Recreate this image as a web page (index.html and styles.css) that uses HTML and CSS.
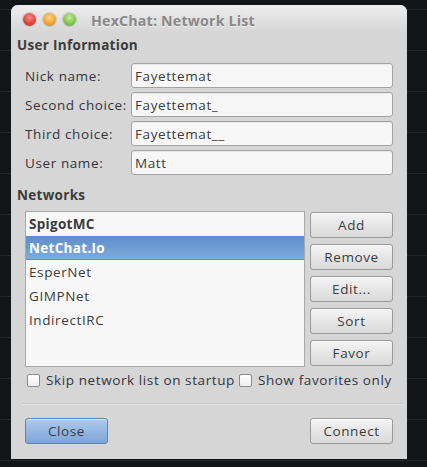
FILE: index.html
```html
<!DOCTYPE html>
<html lang="en">

<head>
    <meta charset="UTF-8">
    <meta name="viewport" content="width=device-width, initial-scale=1.0">
    <title>HexChat: Network List</title>
    <link rel="stylesheet" href="styles.css">
</head>

<body>
    <div class="dialog">
        <div class="titlebar">
            <div class="lights">
                <span class="light red"></span>
                <span class="light orange"></span>
                <span class="light green"></span>
            </div>
            <div class="title">HexChat: Network List</div>
        </div>
        <div class="content">
            <h3>User Information</h3>
            <div class="user_grid">
                <label>Nick name:</label>
                <input class="entry" type="text" value="Fayettemat">
                <label>Second choice:</label>
                <input class="entry" type="text" value="Fayettemat_">
                <label>Third choice:</label>
                <input class="entry" type="text" value="Fayettemat__">
                <label>User name:</label>
                <input class="entry" type="text" value="Matt">
            </div>

            <h3 class="net_title">Networks</h3>
            <div class="net_box">
                <ul class="net_list">
                    <li class="fav">SpigotMC</li>
                    <li class="fav selected">NetChat.Io</li>
                    <li>EsperNet</li>
                    <li>GIMPNet</li>
                    <li>IndirectIRC</li>
                </ul>
                <div class="net_buttons">
                    <button class="btn">Add</button>
                    <button class="btn">Remove</button>
                    <button class="btn">Edit...</button>
                    <button class="btn">Sort</button>
                    <button class="btn">Favor</button>
                </div>
            </div>

            <div class="checks">
                <label class="check"><span class="box"></span>Skip network list on startup</label>
                <label class="check"><span class="box"></span>Show favorites only</label>
            </div>

            <div class="sep"></div>

            <div class="actions">
                <button class="btn primary">Close</button>
                <button class="btn">Connect</button>
            </div>
        </div>
    </div>
</body>

</html>
```

FILE: styles.css
```css
* {
    margin: 0;
    padding: 0;
    box-sizing: border-box;
    list-style: none;
}

body {
    width: 427px;
    height: 467px;
    overflow: hidden;
    padding: 5px 0 0 11px;
    background: #141517 repeating-linear-gradient(180deg, transparent 0 9px, #27282a 9px 10px, transparent 10px 41px);
    font-family: "Open Sans", "DejaVu Sans", sans-serif;
    font-size: 13.5px;
    letter-spacing: .6px;
    color: #3c3c3c;
}

.dialog {
    width: 396px;
    height: 454px;
    background: #d6d6d6;
    border-radius: 7px 7px 0 0;
    display: flex;
    flex-direction: column;
}

/* title bar */
.titlebar {
    height: 28px;
    display: flex;
    align-items: center;
    padding-left: 12px;
    border-radius: 7px 7px 0 0;
    background: linear-gradient(180deg, #ededed, #d6d6d6);
}
.lights {
    display: flex;
    gap: 7px;
}
.light {
    width: 13px;
    height: 13px;
    border-radius: 50%;
    box-shadow: 0 0 0 1px rgba(0, 0, 0, .12);
}
.red {
    background: radial-gradient(circle at 50% 35%, #f58e84 0, #e0473a 55%, #b8281d 100%);
}
.orange {
    background: radial-gradient(circle at 50% 35%, #fbd28a 0, #f0a532 55%, #c97d14 100%);
}
.green {
    background: radial-gradient(circle at 50% 35%, #c4ec95 0, #84c752 55%, #5b9c30 100%);
}
.title {
    margin-left: 15px;
    margin-top: 2px;
    font-size: 14.2px;
    font-weight: bold;
    letter-spacing: .2px;
    color: #888;
    text-shadow: 0 1px 0 rgba(255, 255, 255, .5);
}

/* body */
.content {
    flex: 1;
    padding: 0 14px 0 6px;
    display: flex;
    flex-direction: column;
}
h3 {
    margin-top: 3px;
    height: 18px;
    line-height: 18px;
    font-size: 13.5px;
    font-weight: bold;
    letter-spacing: .3px;
    color: #3c3c3c;
}
.net_title {
    margin-top: 11px;
}

.user_grid {
    margin: 9px 0 0 8px;
    display: grid;
    grid-template-columns: 106px 1fr;
    row-gap: 4px;
    align-items: center;
}
.user_grid label {
    color: #343440;
}
.entry {
    height: 25px;
    padding: 0 3px;
    border: 1px solid #a3a3a3;
    border-radius: 3px;
    background: #f7f7f7;
    font: inherit;
    letter-spacing: inherit;
    color: #3c3c3c;
    box-shadow: inset 0 1px 1px rgba(0, 0, 0, .06);
}

.net_box {
    margin: 7px 0 0 8px;
    height: 156px;
    display: flex;
    gap: 5px;
}
.net_list {
    flex: 1;
    border: 1px solid #a8a8a8;
    background: #f7f7f7;
}
.net_list li {
    height: 24px;
    line-height: 24px;
    padding-left: 3px;
    color: #3c3c3c;
}
.net_list .fav {
    font-weight: bold;
    letter-spacing: .3px;
}
.net_list .selected {
    color: #fff;
    background: linear-gradient(180deg, #5b8dca, #7eabdd);
    border-bottom: 1px solid #5f8fc8;
}
.net_buttons {
    width: 83px;
    padding-top: 1px;
    display: flex;
    flex-direction: column;
    gap: 6px;
}
.btn {
    height: 26px;
    border: 1px solid #9a9a9a;
    border-radius: 3px;
    background: linear-gradient(180deg, #f5f5f5, #e6e6e6 50%, #d9d9d9);
    box-shadow: inset 0 1px 0 rgba(255, 255, 255, .8);
    font: inherit;
    letter-spacing: inherit;
    color: #3c3c3c;
}

.checks {
    margin: 5px 0 0 10px;
    height: 16px;
    display: flex;
    align-items: center;
    gap: 4px;
}
.check {
    display: flex;
    align-items: center;
    gap: 6px;
    color: #343440;
}
.box {
    width: 13px;
    height: 13px;
    border: 1px solid #8c8c8c;
    border-radius: 2px;
    background: linear-gradient(180deg, #ffffff, #ececec);
}

.sep {
    margin: 15px -10px 0 5px;
    height: 2px;
    border-top: 1px solid #c6c6c6;
    border-bottom: 1px solid #e4e4e4;
}

.actions {
    margin: 13px 0 0 8px;
    display: flex;
    justify-content: space-between;
}
.actions .btn {
    width: 83px;
}
.btn.primary {
    border-color: #5f83b2;
    background: linear-gradient(180deg, #aecbed, #94b7e2 50%, #7ea6d8);
    box-shadow: inset 0 1px 0 rgba(255, 255, 255, .5);
}
```
